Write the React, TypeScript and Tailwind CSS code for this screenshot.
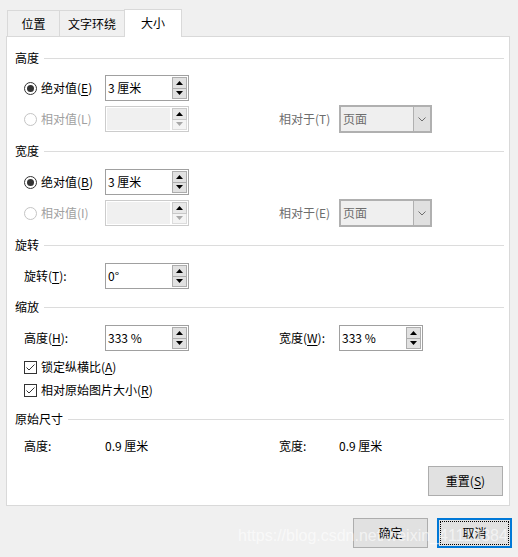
import React from "react";

const U = ({ children }: { children: React.ReactNode }) => (
  <span className="underline underline-offset-2 decoration-1">{children}</span>
);

function Header({ title, className = "" }: { title: string; className?: string }) {
  return (
    <div className={`flex items-center h-[16px] pl-[8px] pr-[5px] ${className}`}>
      <span className="leading-[16px]">{title}</span>
      <div className="ml-[5px] flex-1 h-px bg-[#dcdcdc]" />
    </div>
  );
}

function Radio({ checked, disabled }: { checked?: boolean; disabled?: boolean }) {
  return (
    <div
      className={`w-[13px] h-[13px] rounded-full border bg-white flex items-center justify-center ${
        disabled ? "border-[#c4c4c4]" : "border-[#333333]"
      }`}
    >
      {checked && <div className="w-[7px] h-[7px] rounded-full bg-[#333333]" />}
    </div>
  );
}

function Checkbox() {
  return (
    <div className="w-[13px] h-[13px] border border-[#333333] bg-white flex items-center justify-center">
      <svg width="11" height="11" viewBox="0 0 11 11">
        <path d="M1.5 5.5 L4 8 L9.5 2.5" fill="none" stroke="#333333" strokeWidth="1" />
      </svg>
    </div>
  );
}

function Arrow({ up, color }: { up?: boolean; color: string }) {
  return (
    <svg width="7" height="4" viewBox="0 0 7 4">
      <polygon points={up ? "0,4 7,4 3.5,0" : "0,0 7,0 3.5,4"} fill={color} />
    </svg>
  );
}

function SpinBox({ value, disabled }: { value?: string; disabled?: boolean }) {
  return (
    <div
      className={`w-[84px] h-[26px] border flex bg-white ${
        disabled ? "border-[#cccccc]" : "border-[#a0a0a0]"
      }`}
    >
      <div
        className={`flex-1 pl-[2px] leading-[22px] ${
          disabled ? "bg-[#f0f0f0] m-[1px] mr-[2px]" : "pt-[1px]"
        }`}
      >
        {value}
      </div>
      <div className="flex flex-col w-[15px] my-[1px] mr-[1px]">
        <div
          className={`flex-1 flex items-center justify-center border ${
            disabled ? "border-[#c8c8c8] bg-[#e8e8e8]" : "border-[#adadad] bg-[#e1e1e1]"
          }`}
        >
          <Arrow up color="#000000" />
        </div>
        <div
          className={`flex-1 flex items-center justify-center border border-t-0 ${
            disabled ? "border-[#dcdcdc] bg-[#f4f4f4]" : "border-[#adadad] bg-[#e1e1e1]"
          }`}
        >
          <Arrow color={disabled ? "#a8a8a8" : "#000000"} />
        </div>
      </div>
    </div>
  );
}

function Combo({ value }: { value: string }) {
  return (
    <div className="w-[93px] h-[28px] border-2 border-[#b0b0b0] bg-[#efefef] flex">
      <div className="flex-1 pl-[2px] leading-[23px] text-[#6d6d6d]">{value}</div>
      <div className="w-[17px] border-l border-[#b0b0b0] bg-[#e0e0e0] flex items-center justify-center">
        <svg width="8" height="5" viewBox="0 0 8 5">
          <path d="M0.5 0.5 L4 4 L7.5 0.5" fill="none" stroke="#6d6d6d" strokeWidth="1" />
        </svg>
      </div>
    </div>
  );
}

function Button({ children, focused }: { children: React.ReactNode; focused?: boolean }) {
  if (focused) {
    return (
      <div className="w-[75px] h-[30px] border-2 border-[#0078d7] bg-[#e1e1e1] p-[1px]">
        <div className="w-full h-full border border-dotted border-black flex items-center justify-center">
          {children}
        </div>
      </div>
    );
  }
  return (
    <div className="w-[75px] h-[30px] border border-[#adadad] bg-[#e1e1e1] flex items-center justify-center">
      {children}
    </div>
  );
}

export default function App() {
  return (
    <div className="relative w-[518px] h-[557px] overflow-hidden bg-[#f0f0f0] text-[12px] text-black font-['Microsoft_YaHei_UI','Noto_Sans_CJK_SC',sans-serif]">
      {/* tabs */}
      <div className="flex items-end h-[36px] pl-[7px] relative z-10">
        <div className="w-[53px] h-[26px] border border-b-0 border-[#d9d9d9] bg-[#f0f0f0] flex items-center justify-center">
          位置
        </div>
        <div className="w-[65px] h-[26px] border-t border-r border-[#d9d9d9] bg-[#f0f0f0] flex items-center justify-center">
          文字环绕
        </div>
        <div className="-ml-px w-[58px] h-[28px] -mb-px border border-b-0 border-[#d9d9d9] bg-white flex items-center justify-center pb-[2px]">
          大小
        </div>
      </div>

      {/* panel */}
      <div className="ml-[6px] w-[504px] h-[470px] border border-[#d9d9d9] bg-white flex flex-col pt-[13px]">
        <Header title="高度" />
        <div className="mt-[8px] flex items-center h-[28px] pl-[17px]">
          <div className="w-[81px] flex items-center gap-[4px]">
            <Radio checked />
            <span>
              绝对值(<U>E</U>)
            </span>
          </div>
          <SpinBox value="3 厘米" />
        </div>
        <div className="mt-[3px] flex items-center h-[28px] pl-[17px]">
          <div className="w-[81px] flex items-center gap-[4px] text-[#a0a0a0]">
            <Radio disabled />
            <span>相对值(L)</span>
          </div>
          <SpinBox disabled />
          <div className="ml-[90px] w-[60px] text-[#6d6d6d]">相对于(T)</div>
          <Combo value="页面" />
        </div>

        <Header title="宽度" className="mt-[10px]" />
        <div className="mt-[9px] flex items-center h-[28px] pl-[17px]">
          <div className="w-[81px] flex items-center gap-[4px]">
            <Radio checked />
            <span>
              绝对值(<U>B</U>)
            </span>
          </div>
          <SpinBox value="3 厘米" />
        </div>
        <div className="mt-[3px] flex items-center h-[28px] pl-[17px]">
          <div className="w-[81px] flex items-center gap-[4px] text-[#a0a0a0]">
            <Radio disabled />
            <span>相对值(I)</span>
          </div>
          <SpinBox disabled />
          <div className="ml-[90px] w-[60px] text-[#6d6d6d]">相对于(E)</div>
          <Combo value="页面" />
        </div>

        <Header title="旋转" className="mt-[10px]" />
        <div className="mt-[9px] flex items-center h-[28px] pl-[17px]">
          <div className="w-[81px]">
            旋转(<U>T</U>):
          </div>
          <SpinBox value="0°" />
        </div>

        <Header title="缩放" className="mt-[9px]" />
        <div className="mt-[9px] flex items-center h-[28px] pl-[17px]">
          <div className="w-[81px]">
            高度(<U>H</U>):
          </div>
          <SpinBox value="333 %" />
          <div className="ml-[90px] w-[60px]">
            宽度(<U>W</U>):
          </div>
          <SpinBox value="333 %" />
        </div>
        <div className="mt-[5px] flex items-center h-[20px] pl-[17px] gap-[4px]">
          <Checkbox />
          <span>
            锁定纵横比(<U>A</U>)
          </span>
        </div>
        <div className="mt-[3px] flex items-center h-[20px] pl-[17px] gap-[4px]">
          <Checkbox />
          <span>
            相对原始图片大小(<U>R</U>)
          </span>
        </div>

        <Header title="原始尺寸" className="mt-[11px]" />
        <div className="mt-[9px] flex items-center h-[20px] pl-[17px]">
          <div className="w-[81px]">高度:</div>
          <div className="w-[84px]">0.9 厘米</div>
          <div className="ml-[90px] w-[60px]">宽度:</div>
          <div>0.9 厘米</div>
        </div>

        <div className="mt-[10px] flex justify-end pr-[6px]">
          <Button>
            重置(<U>S</U>)
          </Button>
        </div>
      </div>

      {/* dialog buttons */}
      <div className="mt-[12px] flex justify-end gap-[9px] pr-[6px]">
        <Button>确定</Button>
        <Button focused>取消</Button>
      </div>

      {/* watermark */}
      <div className="absolute left-[238px] top-[524px] whitespace-nowrap text-[16px] text-white/60 font-['Liberation_Sans',sans-serif] pointer-events-none">
        https://blog.csdn.net/weixin_41110384
      </div>
    </div>
  );
}
